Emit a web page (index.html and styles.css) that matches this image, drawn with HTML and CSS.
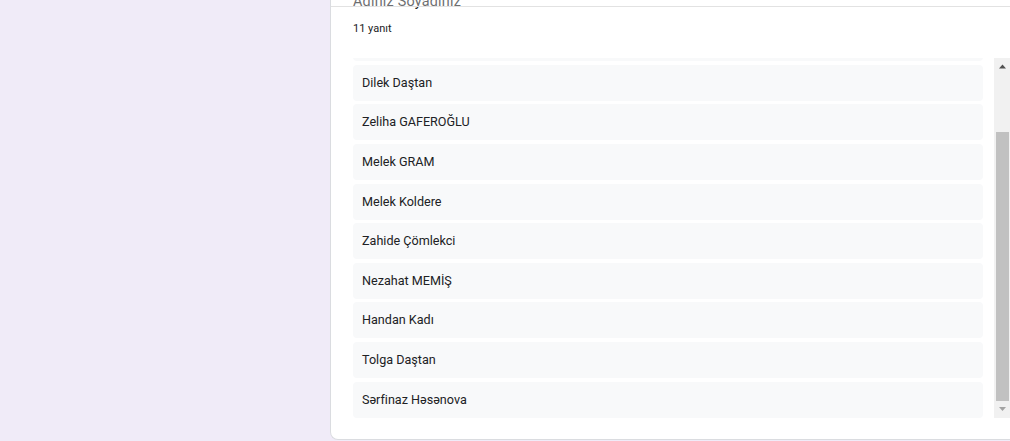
FILE: index.html
```html
<!DOCTYPE html>
<html lang="tr">
<head>
<meta charset="utf-8">
<title>Yanıtlar</title>
<link rel="stylesheet" href="styles.css">
</head>
<body>
<div class="page">
  <div class="side"></div>
  <div class="card">
    <div class="title">Adınız Soyadınız</div>
    <div class="count">11 yanıt</div>
    <div class="listwrap">
      <div class="list">
        <div class="item">Ayşe Yılmaz</div>
        <div class="item">Mehmet Kaya</div>
        <div class="item">Dilek Daştan</div>
        <div class="item">Zeliha GAFEROĞLU</div>
        <div class="item">Melek GRAM</div>
        <div class="item">Melek Koldere</div>
        <div class="item">Zahide Çömlekci</div>
        <div class="item">Nezahat MEMİŞ</div>
        <div class="item">Handan Kadı</div>
        <div class="item">Tolga Daştan</div>
        <div class="item">Sərfinaz Həsənova</div>
      </div>
      <div class="scrollbar">
        <div class="sb-btn">
          <svg width="17" height="17" viewBox="0 0 17 17"><path d="M5 10.5 L8.5 6.5 L12 10.5 Z" fill="#505050"/></svg>
        </div>
        <div class="sb-track"><div class="sb-thumb"></div></div>
        <div class="sb-btn">
          <svg width="17" height="17" viewBox="0 0 17 17"><path d="M5 6 L12 6 L8.5 10 Z" fill="#a3a3a3"/></svg>
        </div>
      </div>
    </div>
  </div>
  <div class="topbar"></div>
</div>
</body>
</html>
```
FILE: styles.css
```css
html, body {
  margin: 0;
  padding: 0;
  height: 100%;
  overflow: hidden;
  background: #f0ebf8;
  font-family: Roboto, "Noto Sans", Arial, sans-serif;
  color: #202124;
}

.page {
  position: relative;
  display: flex;
  align-items: flex-start;
  width: 1040px;
}

.side {
  width: 330px;
  flex: 0 0 330px;
}

.topbar {
  position: absolute;
  left: 331px;
  top: 0;
  right: 0;
  height: 6px;
  background: rgba(255, 255, 255, 0.35);
  border-bottom: 1px solid #e2e2e2;
}

.card {
  flex: 0 0 auto;
  width: 702px;
  box-sizing: border-box;
  height: 440px;
  background: #fff;
  border-left: 1px solid #dadce0;
  border-bottom: 1px solid #dadce0;
  border-bottom-left-radius: 8px;
  padding: 0 22px 0 22px;
  display: flex;
  flex-direction: column;
}

.title {
  margin-top: -8px;
  font-size: 14.4px;
  line-height: 20px;
  height: 20px;
  letter-spacing: 0.2px;
}

.count {
  margin-top: 8.5px;
  font-size: 11px;
  line-height: 16px;
  height: 16px;
}

.listwrap {
  margin-top: 21px;
  display: flex;
  height: 360px;
  width: 658px;
}

.list {
  flex: 0 0 630px;
  margin-right: 11px;
  height: 360px;
  overflow: hidden;
  display: flex;
  flex-direction: column;
  justify-content: flex-end;
  gap: 3.6px;
}

.item {
  height: 36px;
  flex: 0 0 36px;
  display: flex;
  align-items: center;
  padding-left: 9px;
  padding-bottom: 1px;
  box-sizing: border-box;
  background: #f8f9fa;
  border-radius: 4px;
  font-size: 12.6px;
}

.scrollbar {
  flex: 0 0 17px;
  height: 360px;
  background: #f1f1f1;
  display: flex;
  flex-direction: column;
}

.sb-btn {
  flex: 0 0 17px;
  height: 17px;
}

.sb-btn svg {
  display: block;
}

.sb-track {
  flex: 1 1 auto;
  display: flex;
  flex-direction: column;
  justify-content: flex-end;
  padding: 0 2px;
}

.sb-thumb {
  height: 269px;
  background: #c1c1c1;
}
```
